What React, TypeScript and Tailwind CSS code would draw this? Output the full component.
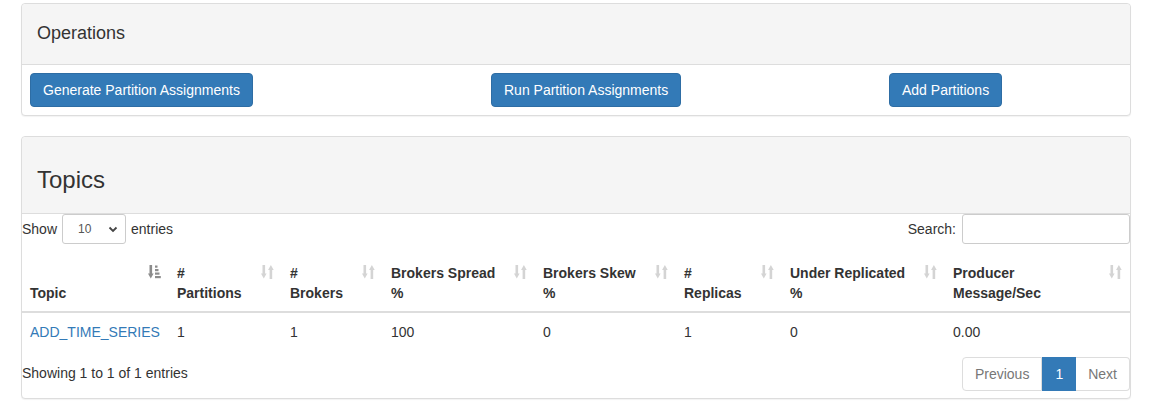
const SortIcon = ({ active }: { active?: boolean }) => {
  if (active) {
    return (
      <svg width="13" height="14" viewBox="0 0 13 14" className="shrink-0 mt-[2px]" fill="#8c8c8c">
        <rect x="1.5" y="0" width="2.6" height="9.5" />
        <polygon points="0,8.5 5.6,8.5 2.8,13.5" />
        <rect x="7" y="0.5" width="2.5" height="2.2" />
        <rect x="7" y="4" width="3.5" height="2.2" />
        <rect x="7" y="7.5" width="4.5" height="2.2" />
        <rect x="7" y="11" width="5.8" height="2.2" />
      </svg>
    );
  }
  return (
    <svg width="13" height="14" viewBox="0 0 13 14" className="shrink-0 mt-[2px]" fill="#d4d4d4">
      <rect x="1.5" y="0" width="2.6" height="9.5" />
      <polygon points="0,8.5 5.6,8.5 2.8,13.5" />
      <polygon points="9.9,0 7.1,5 12.7,5" />
      <rect x="8.6" y="4.5" width="2.6" height="9.5" />
    </svg>
  );
};

const columns = [
  { lines: ["Topic"], width: "w-[147px]", active: true },
  { lines: ["#", "Partitions"], width: "w-[113px]" },
  { lines: ["#", "Brokers"], width: "w-[101px]" },
  { lines: ["Brokers Spread", "%"], width: "w-[152px]" },
  { lines: ["Brokers Skew", "%"], width: "w-[141px]" },
  { lines: ["#", "Replicas"], width: "w-[106px]" },
  { lines: ["Under Replicated", "%"], width: "w-[163px]" },
  { lines: ["Producer", "Message/Sec"], width: "w-[185px]" },
];

const row = ["ADD_TIME_SERIES", "1", "1", "100", "0", "1", "0", "0.00"];

const Button = ({ label }: { label: string }) => (
  <button className="h-[34px] px-3 bg-[#337ab7] border border-[#2e6da4] rounded text-white text-[14px] leading-5 whitespace-nowrap">
    {label}
  </button>
);

export default function App() {
  return (
    <div className="min-h-[418px] bg-white text-[#333] text-[14px] leading-5 font-['Liberation_Sans',Arial,Helvetica,sans-serif] pt-[3px]">
      <div className="ml-[21px] w-[1110px]">
        {/* operations */}
        <div className="border border-[#ddd] rounded bg-white shadow-[0_1px_1px_rgba(0,0,0,0.05)] mb-5">
          <div className="bg-[#f5f5f5] border-b border-[#ddd] rounded-t px-[15px] pt-[19px] h-[61px]">
            <h4 className="text-[18px] leading-[20px] font-normal">Operations</h4>
          </div>
          <div className="grid grid-cols-[461px_398px_1fr] px-2 py-2">
            <div>
              <Button label="Generate Partition Assignments" />
            </div>
            <div>
              <Button label="Run Partition Assignments" />
            </div>
            <div>
              <Button label="Add Partitions" />
            </div>
          </div>
        </div>

        {/* topics */}
        <div className="border border-[#ddd] rounded bg-white shadow-[0_1px_1px_rgba(0,0,0,0.05)] pb-[7px]">
          <div className="bg-[#f5f5f5] border-b border-[#ddd] rounded-t px-[15px] pt-[30px] h-[77px]">
            <h3 className="text-[24px] leading-[26px] font-normal">Topics</h3>
          </div>

          <div className="flex justify-between items-center h-[30px]">
            <div className="flex items-center">
              <span>Show</span>
              <div className="ml-[5px] mr-[5px] w-[64px] h-[30px] border border-[#ccc] rounded-[3px] flex items-center justify-between pl-[15px] pr-[7px] text-[12px] text-[#555]">
                <span>10</span>
                <svg width="10" height="10" viewBox="0 0 10 10" fill="none" stroke="#444" strokeWidth="1.8">
                  <polyline points="1.5,3.5 5,7 8.5,3.5" />
                </svg>
              </div>
              <span>entries</span>
            </div>
            <div className="flex items-center">
              <span className="mr-[6px]">Search:</span>
              <input className="w-[168px] h-[30px] border border-[#ccc] rounded-[3px] outline-none px-2 text-[12px]" />
            </div>
          </div>

          <table className="table-fixed w-full border-collapse mt-[11px]">
            <thead>
              <tr>
                {columns.map((c, i) => (
                  <th
                    key={i}
                    className={`${c.width} p-2 text-left align-bottom font-bold border-b-2 border-[#ddd]`}
                  >
                    <div className="flex justify-between items-stretch h-10">
                      <div className="flex flex-col justify-end">
                        {c.lines.map((l, j) => (
                          <span key={j} className="block whitespace-nowrap">
                            {l}
                          </span>
                        ))}
                      </div>
                      <div className="flex items-start">
                        <SortIcon active={c.active} />
                      </div>
                    </div>
                  </th>
                ))}
              </tr>
            </thead>
            <tbody>
              <tr>
                {row.map((v, i) => (
                  <td key={i} className="px-2 pt-[9px] pb-2 align-top">
                    {i === 0 ? (
                      <a className="text-[#337ab7]" href="#">
                        {v}
                      </a>
                    ) : (
                      v
                    )}
                  </td>
                ))}
              </tr>
            </tbody>
          </table>

          <div className="flex justify-between items-start mt-[7px]">
            <div className="pt-[6px]">Showing 1 to 1 of 1 entries</div>
            <div className="flex h-[34px]">
              <span className="px-3 py-[6px] border border-[#ddd] rounded-l text-[#777] bg-white">Previous</span>
              <span className="px-3 py-[6px] border border-[#337ab7] bg-[#337ab7] text-white">1</span>
              <span className="px-3 py-[6px] border border-[#ddd] border-l-0 rounded-r text-[#777] bg-white">Next</span>
            </div>
          </div>
        </div>
      </div>
    </div>
  );
}
